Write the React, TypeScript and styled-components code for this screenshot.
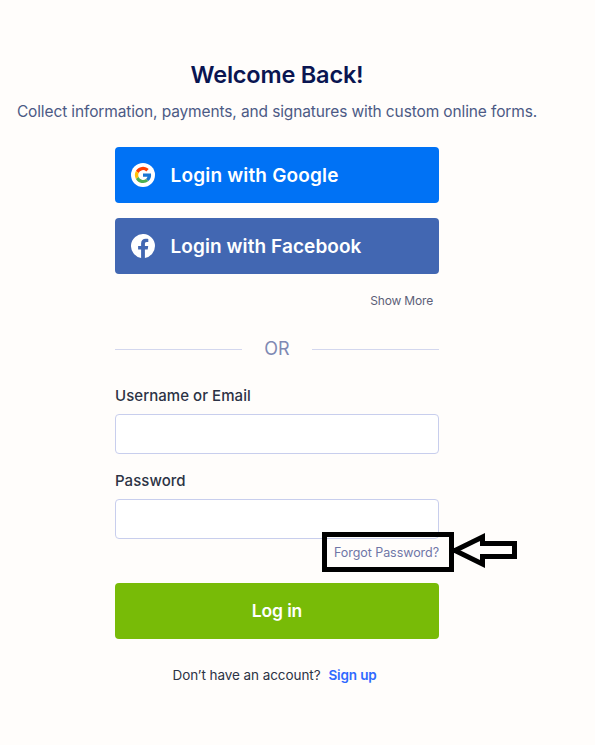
import React from 'react';
import styled, { createGlobalStyle } from 'styled-components';

const GlobalStyle = createGlobalStyle`
  *, *::before, *::after { box-sizing: border-box; }
  body {
    margin: 0;
    background: #fffdfb;
    font-family: Inter, "Liberation Sans", sans-serif;
  }
`;

const Page = styled.main`
  width: 554px;
  height: 745px;
  padding-top: 60px;
  display: flex;
  flex-direction: column;
  align-items: center;
`;

const Title = styled.h1`
  margin: 0;
  font-size: 23.5px;
  font-weight: 600;
  line-height: 30px;
  letter-spacing: -0.2px;
  color: #0a1551;
`;

const Subtitle = styled.p`
  margin: 10px 0 0;
  font-size: 15.5px;
  line-height: 24px;
  letter-spacing: -0.125px;
  white-space: nowrap;
  color: #4c5a85;
`;

const Panel = styled.section`
  width: 324px;
  margin-top: 23px;
  display: flex;
  flex-direction: column;
`;

const SocialList = styled.div`
  display: flex;
  flex-direction: column;
  gap: 15px;
`;

const SocialButton = styled.button<{ $color: string; $spacing: string }>`
  height: 56px;
  padding: 0 16px;
  display: flex;
  align-items: center;
  gap: 15.5px;
  border: 0;
  border-radius: 4px;
  background: ${(p) => p.$color};
  color: #fff;
  font: 600 19px/28px Inter, "Liberation Sans", sans-serif;
  letter-spacing: ${(p) => p.$spacing};

  svg { flex: none; }
`;

const SocialLabel = styled.span`
  padding-top: 2px;
`;

const ShowMore = styled.a`
  align-self: flex-end;
  margin: 17px 6px 0 0;
  font-size: 12px;
  line-height: 20px;
  letter-spacing: -0.18px;
  color: #5c6078;
`;

const Divider = styled.div`
  height: 24px;
  margin-top: 26px;
  display: grid;
  grid-template-columns: 127px 1fr 127px;
  align-items: center;
  text-align: center;
  font-size: 18px;
  line-height: 22px;
  color: #8089b3;

  &::before, &::after {
    content: '';
    height: 1px;
    background: #d3d7ee;
  }
`;

const Form = styled.form`
  margin-top: 25px;
  display: flex;
  flex-direction: column;
`;

const Field = styled.label`
  height: 85px;
  display: flex;
  flex-direction: column;
  gap: 8px;
  font-size: 15px;
  font-weight: 500;
  line-height: 20px;
  letter-spacing: 0.05px;
  color: #2c3345;
`;

const Input = styled.input`
  width: 100%;
  height: 40px;
  padding: 0 12px;
  border: 1px solid #c8ceed;
  border-radius: 4px;
  background: #fff;
  font: inherit;
  outline: 0;
`;

const PasswordGroup = styled.div`
  position: relative;
  height: 112px;
  display: flex;
  flex-direction: column;
`;

const ForgotLink = styled.a`
  align-self: flex-end;
  margin-top: -13px;
  font-size: 12.5px;
  line-height: 20px;
  letter-spacing: -0.05px;
  color: #6f76a7;
`;

const Highlight = styled.div`
  position: absolute;
  left: 207px;
  top: 61px;
  width: 132px;
  height: 40px;
  border: 5px solid #000;
`;

const Pointer = styled.svg`
  position: absolute;
  left: 335px;
  top: 60px;
`;

const LoginButton = styled.button`
  height: 56px;
  border: 0;
  border-radius: 4px;
  background: #78bb07;
  color: #fff;
  font: 600 17.5px/24px Inter, "Liberation Sans", sans-serif;
  letter-spacing: -0.15px;
`;

const Signup = styled.p`
  margin: 25px 5px 0 0;
  display: flex;
  justify-content: center;
  gap: 8px;
  font-size: 13.5px;
  line-height: 22px;
  letter-spacing: -0.07px;
  color: #2c3345;
`;

const SignupLink = styled.a`
  font-weight: 600;
  letter-spacing: -0.15px;
  color: #2e69ff;
`;

function GoogleIcon() {
  return (
    <svg width="24" height="24" viewBox="0 0 24 24">
      <circle cx="12" cy="12" r="12" fill="#fff" />
      <path fill="#ff3e00" d="M4.9 8.1A8.15 8.15 0 0 1 17.7 6.1l-2.4 2.3A4.8 4.8 0 0 0 7.6 10.1Z" />
      <path fill="#ffc107" d="M4.9 8.1a8.15 8.15 0 0 0 0 7.8l2.7-2a4.8 4.8 0 0 1 0-3.8Z" />
      <path fill="#4caf50" d="M4.9 15.9a8.15 8.15 0 0 0 12.6 2.1L15 15.9a4.8 4.8 0 0 1-7.4-2Z" />
      <path fill="#1976d2" d="M12 10.5h8q.6 4.6-2.5 7.5L15 15.9q1.1-.8 1.5-2.1H12Z" />
    </svg>
  );
}

function FacebookIcon() {
  return (
    <svg width="24" height="24" viewBox="0 0 24 24">
      <path fill="#fff" d="M24 12a12 12 0 1 0-13.9 11.9v-8.4H7.1V12h3V9.4c0-3 1.8-4.7 4.6-4.7 1.3 0 2.6.2 2.6.2v3h-1.5c-1.5 0-1.9.9-1.9 1.8V12h3.3l-.5 3.5h-2.8v8.4A12 12 0 0 0 24 12Z" />
    </svg>
  );
}

export default function App() {
  return (
    <>
      <GlobalStyle />
      <Page>
        <Title>Welcome Back!</Title>
        <Subtitle>Collect information, payments, and signatures with custom online forms.</Subtitle>
        <Panel>
          <SocialList>
            <SocialButton $color="#0072f5" $spacing="0.18px">
              <GoogleIcon />
              <SocialLabel>Login with Google</SocialLabel>
            </SocialButton>
            <SocialButton $color="#4267b2" $spacing="0.08px">
              <FacebookIcon />
              <SocialLabel>Login with Facebook</SocialLabel>
            </SocialButton>
          </SocialList>
          <ShowMore>Show More</ShowMore>
          <Divider>OR</Divider>
          <Form onSubmit={(e) => e.preventDefault()}>
            <Field>
              Username or Email
              <Input type="text" />
            </Field>
            <PasswordGroup>
              <Field>
                Password
                <Input type="password" />
              </Field>
              <ForgotLink>Forgot Password?</ForgotLink>
              <Highlight />
              <Pointer width="70" height="38" viewBox="0 0 70 38" fill="none" stroke="#000" strokeWidth="5">
                <path d="M5 19.5 32.5 6v6.5H64.5v13H32.5V33Z" strokeLinejoin="miter" strokeMiterlimit="2" />
              </Pointer>
            </PasswordGroup>
            <LoginButton type="submit">Log in</LoginButton>
          </Form>
          <Signup>
            Don’t have an account?
            <SignupLink>Sign up</SignupLink>
          </Signup>
        </Panel>
      </Page>
    </>
  );
}
